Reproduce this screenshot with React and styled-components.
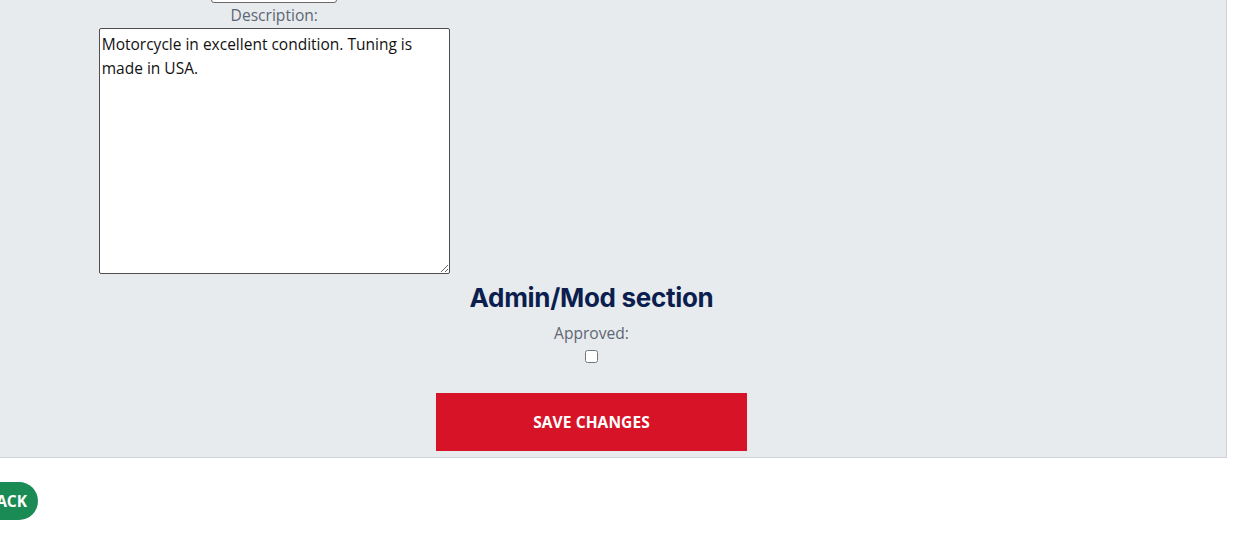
import React from 'react';
import styled, { createGlobalStyle } from 'styled-components';

const GlobalStyle = createGlobalStyle`
  html, body {
    margin: 0;
    padding: 0;
    background: #fff;
    overflow: hidden;
  }
  body {
    font-family: "Open Sans", "Noto Sans", sans-serif;
  }
`;

const Viewport = styled.div`
  width: 1244px;
  height: 549px;
  overflow: hidden;
`;

// page is scrolled: shift it up and left like the screenshot
const Page = styled.div`
  margin: -24px 0 0 -43px;
  width: 1300px;
`;

const Panel = styled.form`
  width: 1269px;
  background: #e7ebee;
  border-right: 1px solid #cfd3d7;
  border-bottom: 1px solid #cfd3d7;
  padding-bottom: 6px;
  display: flex;
  flex-direction: column;
  align-items: center;
`;

const Columns = styled.div`
  width: 100%;
  display: grid;
  grid-template-columns: 1fr 1fr;
`;

const Column = styled.div`
  display: flex;
  flex-direction: column;
  align-items: center;
`;

const Label = styled.label`
  display: block;
  font-size: 15.6px;
  line-height: ${props => (props.$tall ? '25px' : '24px')};
  color: #5f6673;
  text-align: center;
`;

const TextInput = styled.input`
  box-sizing: border-box;
  width: 126px;
  height: 27px;
  border: 1px solid #6b6b6b;
  border-radius: 3px;
  background: #fff;
`;

const TextArea = styled.textarea`
  box-sizing: border-box;
  width: 351px;
  height: 246px;
  border: 1px solid #4f4f4f;
  border-radius: 2px;
  padding: 3px 2px;
  font-family: "Open Sans", "Noto Sans", sans-serif;
  font-size: 15.5px;
  line-height: 24px;
  color: #111;
  background: #fff;
  resize: both;
`;

const SectionTitle = styled.h2`
  margin: 8px 0 8px;
  font-family: Inter, Roboto, sans-serif;
  font-weight: 700;
  font-size: 26px;
  line-height: 31px;
  letter-spacing: -0.3px;
  color: #0b1e4e;
`;

const Checkbox = styled.input`
  display: block;
  width: 13px;
  height: 13px;
  margin: 5px 0 0;
`;

const SaveButton = styled.button`
  margin-top: 30px;
  width: 311px;
  height: 58px;
  border: none;
  background: #d71427;
  color: #fff;
  font-family: "Open Sans", "Noto Sans", sans-serif;
  font-weight: 700;
  font-size: 15.5px;
  letter-spacing: 0.1px;
  cursor: pointer;
`;

const BackButton = styled.button`
  display: block;
  margin: 24px 0 0 0;
  width: 81px;
  height: 38px;
  border: none;
  border-radius: 19px;
  background: #1b8b55;
  color: #fff;
  font-family: "Open Sans", "Noto Sans", sans-serif;
  font-weight: 700;
  font-size: 15.5px;
  text-align: right;
  padding: 0 11px 0 0;
  cursor: pointer;
`;

const App = () => {
  return (
    <Viewport>
      <GlobalStyle />
      <Page>
        <Panel onSubmit={e => e.preventDefault()}>
          <Columns>
            <Column>
              <TextInput type='text' />
              <Label htmlFor='description' $tall>
                Description:
              </Label>
              <TextArea
                id='description'
                defaultValue='Motorcycle in excellent condition. Tuning is made in USA.'
              />
            </Column>
            <Column />
          </Columns>
          <SectionTitle>Admin/Mod section</SectionTitle>
          <Label htmlFor='approved'>Approved:</Label>
          <Checkbox id='approved' type='checkbox' />
          <SaveButton type='submit'>SAVE CHANGES</SaveButton>
        </Panel>
        <BackButton type='button'>BACK</BackButton>
      </Page>
    </Viewport>
  );
};

export default App;
